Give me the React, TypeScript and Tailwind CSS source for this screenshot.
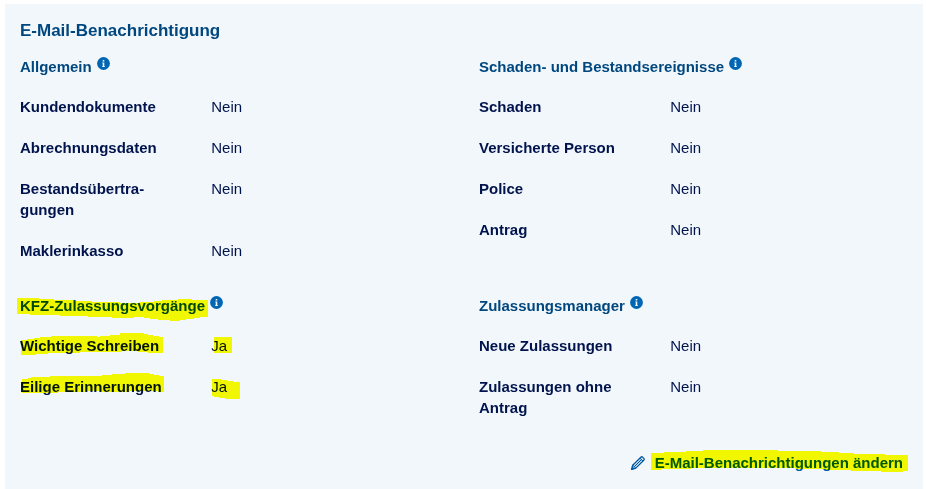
import type { ReactElement, ReactNode } from 'react';

interface Setting {
  label: string;
  value: string;
  labelMark?: string;
  valueMark?: string;
}

interface SettingGroup {
  title: string;
  titleMark?: string;
  settings: Setting[];
}

// Mark outlines are in pixels, measured from the top left of the text they cover.
const GROUPS: SettingGroup[] = [
  {
    title: 'Allgemein',
    settings: [
      { label: 'Kundendokumente', value: 'Nein' },
      { label: 'Abrechnungsdaten', value: 'Nein' },
      { label: 'Bestandsübertra\u00adgungen', value: 'Nein' },
      { label: 'Maklerinkasso', value: 'Nein' },
    ],
  },
  {
    title: 'Schaden- und Bestandsereignisse',
    settings: [
      { label: 'Schaden', value: 'Nein' },
      { label: 'Versicherte Person', value: 'Nein' },
      { label: 'Police', value: 'Nein' },
      { label: 'Antrag', value: 'Nein' },
    ],
  },
  {
    title: 'KFZ-Zulassungsvorgänge',
    titleMark:
      'M-3 2H19V3H34V4H54V5H72V6H100V7H120V6H134V5H142V4H158V3H172V4H188V21H180V22H174V23H166V24H160V25H150V24H138V23H130V22H124V21H114V22H92V21H68V20H40V19H10V18H-3Z',
    settings: [
      {
        label: 'Wichtige Schreiben',
        value: 'Ja',
        labelMark: 'M1 5V4H7V3H14V2H20V1H31V0H77V1H80V0H90V-1H100V-3H124V-2H128V-1H133V0H139V1H143V17H128V16H118V15H102V16H60V17H28V18H16V19H1Z',
        valueMark: 'M3 1H21V17H3Z',
      },
      {
        label: 'Eilige Erinnerungen',
        value: 'Ja',
        labelMark: 'M2 2H8V1H11V0H30V-1H82V-2H92V-3H105V-4H129V-3H134V-2H139V-1H144V15H138V14H110V15H82V14H66V15H38V16H2Z',
        valueMark: 'M1 2H10V3H16V4H22V5H29V22H14V21H8V20H3V19H1Z',
      },
    ],
  },
  {
    title: 'Zulassungsmanager',
    settings: [
      { label: 'Neue Zulassungen', value: 'Nein' },
      { label: 'Zulassungen ohne Antrag', value: 'Nein' },
    ],
  },
];

const LINK_MARK =
  'M-4 0H9V-1H31V-2H48V-3H123V-2H166V-1H184V0H199V1H230V2H253V18H248V19H226V18H196V17H170V16H140V15H36V16H6V17H-4Z';

export default function App(): ReactElement {
  return (
    <main className="bg-white pl-[5px] pr-[3px] pt-1 font-['Liberation_Sans',Arial,sans-serif] text-[15px] leading-[21px] text-[#00134d]">
      <section className="bg-[#f1f7fb] pt-4 pb-4">
        <h2 className="mb-[15px] px-[15px] text-[17px] leading-[21px] font-bold text-[#00477f]">
          E-Mail-Benachrichtigung
        </h2>
        <div className="grid grid-cols-2 gap-y-[34px]">
          {GROUPS.map((group) => (
            <Group key={group.title} group={group} />
          ))}
        </div>
        <div className="mt-[34px] flex justify-end pr-5">
          <a href="#aendern" className="flex items-center gap-[10px] font-bold text-[#0058a3]">
            <PencilIcon />
            <Marked mark={LINK_MARK}>E-Mail-Benachrichtigungen ändern</Marked>
          </a>
        </div>
      </section>
    </main>
  );
}

function Group({ group }: { group: SettingGroup }): ReactElement {
  return (
    <section>
      <div className="mb-[19px] flex items-start gap-[5px] px-[15px]">
        <h3 className="font-bold text-[#00477f]">
          <Marked mark={group.titleMark}>{group.title}</Marked>
        </h3>
        <button type="button" aria-label={`Info zu ${group.title}`} className="pt-px">
          <InfoIcon />
        </button>
      </div>
      <dl className="space-y-5">
        {group.settings.map((s) => (
          <div key={s.label} className="grid grid-cols-12">
            <dt className="col-span-5 px-[15px] font-bold">
              <Marked mark={s.labelMark}>{s.label}</Marked>
            </dt>
            <dd className="col-span-7 px-[15px]">
              <Marked mark={s.valueMark}>{s.value}</Marked>
            </dd>
          </div>
        ))}
      </dl>
    </section>
  );
}

function Marked({ mark, children }: { mark?: string; children: ReactNode }): ReactElement {
  if (!mark) return <>{children}</>;
  return (
    <span className="relative block w-fit">
      {children}
      <svg
        aria-hidden="true"
        className="pointer-events-none absolute top-px left-0 h-full w-full overflow-visible mix-blend-multiply"
      >
        <path d={mark} fill="#ffff00" />
      </svg>
    </span>
  );
}

function InfoIcon(): ReactElement {
  return (
    <svg aria-hidden="true" className="h-[13px] w-[13px]" viewBox="0 0 13 13">
      <circle cx="6.5" cy="6.5" r="6.4" fill="#0066b3" />
      <path d="M5.7 3h1.6v1.6H5.7zM5.2 5.4h2.1v3.8h.6v.8H5.1v-.8h.6V6.2h-.5z" fill="#f1f7fb" />
    </svg>
  );
}

function PencilIcon(): ReactElement {
  return (
    <svg aria-hidden="true" className="h-[14px] w-[14px]" viewBox="0 0 14 14" fill="none" stroke="#0058a3">
      <path
        d="M1.7 9.2 9.8 1.2q1-.9 1.9 0l1.1 1.1q.9.9 0 1.9L4.8 12.1.5 13.5z"
        fill="#c3dcee"
        strokeWidth="1.2"
        strokeLinejoin="round"
      />
      <path d="M3.3 10.7 10.4 3.6M8.9 2.1l3 3M1.7 9.2l3.1 2.9" strokeWidth="1" />
      <path d="m1.3 10.8 2 2L.5 13.5z" fill="#0058a3" strokeWidth=".5" />
    </svg>
  );
}
